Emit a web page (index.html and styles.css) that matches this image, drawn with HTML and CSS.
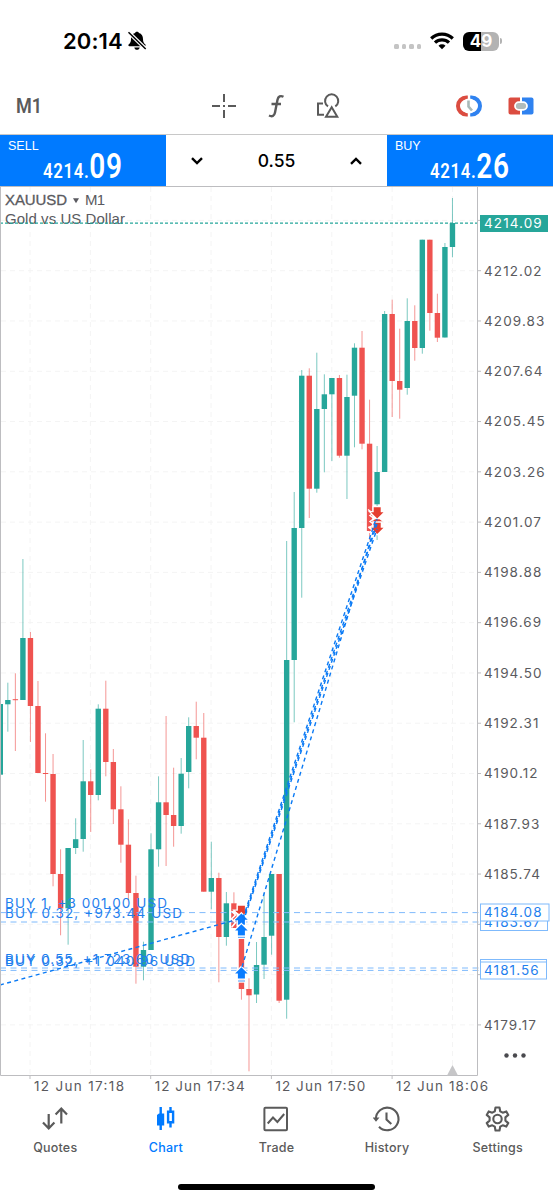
FILE: index.html
```html
<!DOCTYPE html>
<html lang="en">
<head>
    <meta charset="utf-8">
    <title>XAUUSD M1</title>
    <link rel="stylesheet" href="styles.css">
</head>
<body>
    <div class="app">
        <div class="statusbar">
            <span class="time">20:14</span>
            <svg class="bell" width="20" height="20" viewBox="0 0 20 20">
                <path d="M10 .8c-1 0-1.700.5-1.900 1.200C5.200 2.800 4 5 4 8c0 3-.8 4.200-2.200 5.300-.9.8-.4 2 .7 2h15c1.100 0 1.600-1.200.7-2C16.800 12.200 16 11 16 8c0-3-1.200-5.200-4.100-6C11.700 1.300 11 .8 10 .8zM7.300 16.400h5.400c-.3 1.400-1.300 2.300-2.700 2.300s-2.400-.9-2.700-2.300z"/>
                <path d="M1.500 1.200 18.700 18" stroke="#fff" stroke-width="3.800"/>
                <path d="M1.500 1.200 18.700 18" stroke="#000" stroke-width="1.500"/>
            </svg>
            <div class="dots"><i></i><i></i><i></i><i></i></div>
            <svg class="wifi" width="24" height="18" viewBox="0 0 24 18" fill="none" stroke="#000" stroke-width="3.200">
                <path d="M1.200 6.500a15.500 15.500 0 0 1 21.600 0"/>
                <path d="M5 10.700a10 10 0 0 1 14 0"/>
                <path d="M12 17.200 8.500 13.700a5 5 0 0 1 7 0z" fill="#000" stroke="none"/>
            </svg>
            <div class="battery">49</div>
            <div class="battery-cap"></div>
        </div>

        <div class="toolbar">
            <div class="timeframe"><span>M1</span></div>
            <svg class="tool-cross" width="26" height="26" viewBox="0 0 26 26" stroke="#5a5a5a" stroke-width="2" fill="none">
                <path d="M13 1v8M13 17v8M1 13h8M17 13h8M12 13h2"/>
            </svg>
            <svg class="tool-func" width="18" height="26" viewBox="0 0 18 26" stroke="#5a5a5a" stroke-width="2.400" fill="none">
                <path d="M16.500 3.800c-3-1.500-5.300-.5-6 3L8 19.500c-.7 3.500-2.800 4.500-6 3M4.500 11h9.500"/>
            </svg>
            <svg class="tool-shapes" width="24" height="26" viewBox="0 0 24 26" stroke="#5a5a5a" stroke-width="2" fill="none">
                <path d="M7 10.500H2v11.300h6"/>
                <path d="M12 13.400a6.600 6.600 0 1 1 7.300 0"/>
                <path d="M15.700 14.200 21.300 23.800H10z"/>
            </svg>
            <svg class="tool-clock" width="26" height="22" viewBox="0 0 26 22" fill="none">
                <path d="M11.800 2.500H10.500a8.500 8.500 0 0 0 0 17h1.300" stroke="#db4c40" stroke-width="4"/>
                <path d="M14.200 2.500h1.300a8.500 8.500 0 0 1 0 17h-1.300" stroke="#2f82f0" stroke-width="4"/>
                <circle cx="13" cy="11" r="7.500" fill="#fff"/>
                <path d="M12.500 5.500v6l3.500 4" stroke="#a9b9b8" stroke-width="2.600"/>
            </svg>
            <svg class="tool-link" width="26" height="18" viewBox="0 0 26 18">
                <path d="M2.500.5H12v17H2.500a2 2 0 0 1-2-2v-13a2 2 0 0 1 2-2z" fill="#db4c40"/>
                <path d="M14 .5h9.500a2 2 0 0 1 2 2v13a2 2 0 0 1-2 2H14z" fill="#2f82f0"/>
                <rect x="7" y="5.200" width="12" height="7.600" rx="3.800" fill="#b1bcbb" stroke="#fff" stroke-width="1.800"/>
            </svg>
        </div>

        <div class="deal">
            <div class="quote sell">
                <span class="side">SELL</span>
                <span class="price">4214.<b>09</b></span>
            </div>
            <div class="volume">
                <svg width="12" height="8" viewBox="0 0 12 8" fill="none" stroke="#000" stroke-width="2.400"><path d="M1 1.200 6 6l5-4.800"/></svg>
                <span>0.55</span>
                <svg width="12" height="8" viewBox="0 0 12 8" fill="none" stroke="#000" stroke-width="2.400"><path d="M1 6.800 6 2l5 4.800"/></svg>
            </div>
            <div class="quote buy">
                <span class="side">BUY</span>
                <span class="price">4214.<b>26</b></span>
            </div>
        </div>

        <svg class="chart" id="chart" width="553" height="914" viewBox="0 186 553 914"></svg>

        <div class="tabs">
            <div class="tab">
                <svg width="28" height="28" viewBox="0 0 28 28" fill="none" stroke="#5a5a5a" stroke-width="2.200">
                    <path d="M7.700 9v14.500M2 17.500l5.700 6 5.700-6M20.300 18.500V4M14.600 9.500l5.700-6 5.700 6"/>
                </svg>
                <span>Quotes</span>
            </div>
            <div class="tab active">
                <svg width="28" height="28" viewBox="0 0 28 28" fill="#007aff" stroke="#007aff" stroke-width="2.400">
                    <path d="M8.700 2v23M18.500 2v4.500M18.500 18v4.500"/>
                    <path d="M5 10l2-1.500h5.200v12H5z" stroke="none"/>
                    <path d="M16.100 6.800h5v10.400h-5z" fill="none"/>
                </svg>
                <span>Chart</span>
            </div>
            <div class="tab">
                <svg width="28" height="28" viewBox="0 0 28 28" fill="none" stroke="#5a5a5a" stroke-width="2">
                    <rect x="2.400" y="2.700" width="22.600" height="22.600" rx="1"/>
                    <path d="M5.700 18.500l5.300-6 4.400 4.500L22.200 9"/>
                </svg>
                <span>Trade</span>
            </div>
            <div class="tab">
                <svg width="28" height="28" viewBox="0 0 28 28" fill="none" stroke="#5a5a5a" stroke-width="2.100">
                    <path d="M2.900 14A11.300 11.300 0 1 1 6 21.700"/>
                    <path d="M-.5 12.500h7L3 16.800z" fill="#5a5a5a" stroke="none"/>
                    <path d="M13.500 7.500v7l4.800 4.500"/>
                </svg>
                <span>History</span>
            </div>
            <div class="tab">
                <svg width="28" height="28" viewBox="0 0 28 28" fill="none" stroke="#5a5a5a" stroke-width="2.100" stroke-linejoin="round">
                    <path d="M11.500 2.500h4l.7 3.800 2.500 1.400 3.600-1.300 2 3.500-2.900 2.500v3.200l2.900 2.500-2 3.500-3.600-1.300-2.500 1.400-.7 3.800h-4l-.7-3.800-2.500-1.400-3.600 1.300-2-3.500 2.900-2.500v-3.200L2.700 9.900l2-3.500 3.600 1.300 2.500-1.400z"/>
                    <circle cx="13.500" cy="14" r="4.200"/>
                </svg>
                <span>Settings</span>
            </div>
        </div>
        <div class="home"></div>
    </div>
    <script src="chart.js"></script>
</body>
</html>
```
FILE: styles.css
```css
body {
    margin: 0;
    background-color: #ffffff;
    font-family: Inter, "Liberation Sans", sans-serif;
}
.app {
    display: flex;
    flex-direction: column;
    width: 553px;
    height: 1200px;
    overflow: hidden;
}
.statusbar {
    display: flex;
    align-items: center;
    box-sizing: border-box;
    height: 82px;
    padding: 0 51px 0 63px;
}
.time {
    width: 59px;
    font-size: 22px;
    font-weight: 600;
    letter-spacing: 0.1px;
    white-space: nowrap;
}
.bell {
    margin-left: 5px;
}
.dots {
    display: flex;
    gap: 3px;
    margin: 11px 9px 0 auto;
}
.dots i {
    width: 4.500px;
    height: 4.500px;
    border-radius: 1.500px;
    background-color: #c4c4c4;
}
.battery {
    width: 36px;
    height: 19px;
    margin-left: 9px;
    border-radius: 6px;
    background: linear-gradient(90deg, #000000 50%, #b3b3b3 50%);
    color: #ffffff;
    font-size: 17px;
    font-weight: 700;
    line-height: 19px;
    text-align: center;
}
.battery-cap {
    width: 2px;
    height: 6px;
    margin-left: 1px;
    border-radius: 0 2px 2px 0;
    background-color: #b3b3b3;
}
.toolbar {
    display: flex;
    align-items: center;
    box-sizing: border-box;
    height: 52px;
    padding: 0 19px 5px 16px;
}
.timeframe {
    width: 195px;
    color: #5a5a5a;
    font-family: Roboto, sans-serif;
    font-size: 21px;
    font-weight: 600;
}
.timeframe span {
    display: inline-block;
    transform: scaleX(0.86);
    transform-origin: left;
}
.tool-func {
    margin-left: 30px;
}
.tool-shapes {
    margin-left: 31px;
}
.tool-clock {
    margin-left: auto;
}
.tool-link {
    margin-left: 26px;
}
.deal {
    display: flex;
    box-sizing: border-box;
    height: 52px;
    border-top: 1px solid #c8c8c8;
}
.quote {
    display: flex;
    flex-direction: column;
    width: 166px;
    height: 51px;
    background-color: #007aff;
    color: #ffffff;
}
.side {
    height: 17px;
    padding: 4px 0 0 8px;
    font-family: "Liberation Sans", sans-serif;
    font-size: 12.500px;
    line-height: 15px;
}
.price {
    align-self: center;
    font-family: Roboto, sans-serif;
    font-size: 21px;
    font-weight: 600;
    line-height: 22px;
    letter-spacing: 0.8px;
    transform: scaleX(0.8);
}
.price b {
    font-size: 35px;
    font-weight: 600;
}
.volume {
    display: flex;
    flex: 1;
    align-items: center;
    justify-content: space-between;
    padding: 0 25px;
    font-size: 17.500px;
    font-weight: 500;
}
.chart {
    display: block;
    flex: none;
}
.grid {
    stroke: #f4f4f4;
    stroke-dasharray: 5 4;
}
.axis {
    fill: none;
    stroke: #bdbdc0;
}
.label {
    fill: #5a5a5e;
    font-size: 13.500px;
}
.number {
    letter-spacing: 1.1px;
}
.symbol {
    fill: #5a5a60;
    font-family: "Liberation Sans", sans-serif;
    font-size: 15px;
}
.up {
    fill: #26a69a;
    stroke: #26a69a;
}
.down {
    fill: #ef5350;
    stroke: #ef5350;
}
.wick {
    stroke-width: 1;
    opacity: 0.6;
}
.body {
    stroke: none;
}
.bid {
    stroke: #26a69a;
    stroke-width: 1.300;
    stroke-dasharray: 3 2;
}
.position {
    stroke: #7fbafc;
    stroke-dasharray: 6 4.500;
}
.position-text {
    fill: #1f80ee;
    font-size: 13.500px;
}
.position-box {
    fill: #ffffff;
    stroke: #7fbafc;
}
.trend {
    stroke: #0a7af5;
    stroke-width: 1.400;
    stroke-dasharray: 4 3.400;
}
.tabs {
    display: flex;
    height: 60px;
    padding-top: 5px;
}
.tab {
    display: flex;
    flex: 1;
    flex-direction: column;
    align-items: center;
    color: #5a5a5a;
    font-size: 12.500px;
    font-weight: 500;
    letter-spacing: 0.2px;
}
.tab span {
    margin-top: 7px;
    line-height: 16px;
}
.active {
    color: #007aff;
}
.home {
    width: 197px;
    height: 6px;
    margin: 18.500px auto 0;
    border-radius: 3px;
    background-color: #000000;
}
```
FILE: chart.js
```javascript
// direction, high, body top, body bottom, low
const candles = [
    ["up", 704, 704, 774.7, 774.7], ["up", 682.7, 700, 704.3, 731.7], ["down", 673.3, 699.2, 700.2, 751],
    ["up", 559, 638, 700, 700], ["down", 632, 638, 706, 742], ["down", 681, 706, 773, 773],
    ["down", 733.3, 773, 774, 801.7], ["down", 754, 774, 874, 886.3], ["down", 849.3, 874, 908.5, 935.3],
    ["up", 848, 848, 908.3, 944.7], ["up", 818.3, 839.2, 848, 854], ["up", 740, 781.3, 839, 851.7],
    ["down", 769.3, 781.3, 795, 832], ["up", 704.3, 708.7, 795, 800.3], ["down", 680.7, 708.7, 762, 776.3],
    ["down", 749, 762, 809.3, 824], ["down", 786.3, 809.3, 844.7, 862.7], ["down", 819.3, 844.7, 893, 900],
    ["down", 875.7, 893, 966.7, 983.7], ["up", 941.7, 950, 966.7, 980.3], ["up", 833.3, 849.3, 950, 950],
    ["up", 776.3, 802.3, 849.3, 866.7], ["down", 716, 802.3, 815, 866], ["down", 767.7, 815, 826, 846.7],
    ["up", 758, 773.7, 826, 833.7], ["up", 717.3, 726, 772, 788.3], ["down", 701.7, 726, 737.7, 759.3],
    ["down", 713, 737.7, 891.7, 891.7], ["up", 841.7, 878, 891.7, 909.3], ["down", 872.7, 878, 937, 982.3],
    ["up", 892, 903.3, 937, 945.7], ["down", 892.3, 903.3, 928, 928], ["down", 906, 906, 989, 999.7],
    ["down", 978.3, 989, 995.3, 1071.3], ["up", 942, 965, 994.5, 1003], ["up", 892.7, 937, 964.7, 979],
    ["up", 874, 874, 935.7, 954.7], ["down", 874, 874, 1000.7, 1003], ["up", 541, 660, 999.7, 1018.7],
    ["up", 492, 528, 660, 722.3], ["up", 370, 375.7, 528, 597.7], ["down", 368.3, 375.7, 488.7, 518],
    ["up", 352.7, 409, 488.7, 492.7], ["up", 374.3, 394.3, 409, 472.3], ["up", 378, 378, 394.3, 461],
    ["down", 375, 378, 455.7, 457.7], ["up", 374.7, 397, 455.7, 499], ["up", 343.3, 347.7, 395.7, 447.3],
    ["down", 331, 347.7, 443.7, 449.3], ["down", 399.7, 443.7, 531, 540], ["up", 446, 472, 504.3, 540],
    ["up", 311, 314, 472, 472], ["down", 299.7, 314, 381, 417], ["down", 328.7, 381, 389.7, 418.7],
    ["up", 298.3, 321, 388, 394.7], ["down", 305.3, 321, 348, 360.7], ["up", 239.7, 239.7, 348, 353.7],
    ["down", 239.7, 239.7, 313, 330.7], ["down", 293.7, 313, 337.7, 342], ["up", 243, 247, 337.5, 337.5],
    ["up", 198, 223, 247, 257.3]
];
const times = ["17:18", "17:34", "17:50", "18:06"];
let out = "";

function line(cls, x1, y1, x2, y2) {
    out += `<line class="${cls}" x1="${x1}" y1="${y1}" x2="${x2}" y2="${y2}"/>`;
}

// width 0 keeps the natural width of the text
function text(cls, x, y, width, str, extra) {
    const fit = width ? `textLength="${width}"` : "";
    out += `<text class="${cls}" x="${x}" y="${y}" ${fit} ${extra || ""}>${str}</text>`;
}

// Arrow with a white edge, dir is 1 for up and -1 for down, y is the tip
function arrow(x, y, dir, color) {
    const p = [[0, 0], [6.3, 6.3], [3.5, 6.3], [3.5, 11.3], [-3.5, 11.3], [-3.5, 6.3], [-6.3, 6.3]];
    const points = p.map(([a, b]) => (x + a) + "," + (y + b * dir)).join(" ");
    out += `<polygon points="${points}" fill="${color}" stroke="#fff" stroke-width="2.4" paint-order="stroke"/>`;
}

// Grid and axis
for (let i = 0; i < 8; i++) {
    line("grid", 30 + i * 60.35, 187, 30 + i * 60.35, 1075);
}
for (let i = -1; i < 16; i++) {
    const y = 270.7 + i * 50.28;
    line("grid", 1, y, 477, y);
    line("axis", 477, y, 481, y);
    // rows 13 and 14 are under the position tags
    if (i >= 0 && i !== 13 && i !== 14) {
        text("label number", 484, y + 4.8, 0, (4212.02 - i * 2.19).toFixed(2));
    }
}

// Symbol
text("symbol", 5, 205, 62, "XAUUSD", 'stroke="#5a5a60" stroke-width="0.3"');
out += '<path d="M73 198.300h6l-3 5z" fill="#5a5a60"/>';
text("symbol", 85, 205, 20, "M1");
text("symbol", 5, 223.500, 120, "Gold vs US Dollar");

candles.forEach(([dir, high, top, bottom, low], i) => {
    const x = 0.3 + i * 7.536;
    line(dir + " wick", x, high, x, low);
    out += `<rect class="${dir} body" x="${x - 2.7}" y="${top}" width="5.4" height="${bottom - top}"/>`;
});

line("bid", 0, 223.2, 477, 223.2);

// Open positions
[912.6, 922, 968, 970.4].forEach(y => line("position", 0, y, 480, y));
text("position-text", 5, 908.3, 162, "BUY 1, +3 001.00 USD");
text("position-text", 5, 918, 177, "BUY 0.32, +973.44 USD");
text("position-text", 5, 963.8, 185, "BUY 0.55, +1 723.60 USD");
text("position-text", 5, 966.3, 190, "BUY 0.32, +1 040.96 USD");

// Deals
arrow(241.4, 917, -1, "#e53e30");
out += '<path d="M231.500 911l4 4-4 4 4 3.500-4 5M233 911l6 4" fill="none" stroke="#fff" stroke-width="1.600"/>';
arrow(241.4, 913.5, 1, "#0a7cff");
arrow(241.4, 924.3, 1, "#0a7cff");
arrow(241.4, 967.3, 1, "#0a7cff");
[937.3, 981].forEach(y => {
    out += `<rect x="237.500" y="${y - 1.5}" width="8" height="3.200" fill="#fff"/>`;
    out += `<rect x="238" y="${y - 0.5}" width="7" height="1" fill="#4a9cf8"/>`;
});
out += '<path d="M368 509.500l5 4-3 2 4 3-4 3 4 3-5 3 4 3-4 2" fill="none" stroke="#fff" stroke-width="1.400"/>';
arrow(377.2, 518.5, -1, "#e53e30");
out += '<path d="M372 521.500h10.500l-3-2.300h-4.500z" fill="#e53e30"/>';
arrow(377.2, 534, -1, "#e53e30");

line("trend", 0, 985, 239, 919);
line("trend", 243, 918, 376, 519);
line("trend", 243, 920, 377, 524);
line("trend", 243, 922, 377, 529);
line("trend", 242, 967, 377, 519);

// Price tags
function tag(y, width, price) {
    out += `<rect class="position-box" x="480.500" y="${y - 8.5}" width="${width}" height="17"/>`;
    if (price) {
        text("position-text number", 484, y + 4.8, 0, price);
    }
}
tag(922, 67, "4183.67");
tag(912.5, 68.5, "4184.08");
tag(968, 66, "");
tag(970.5, 66, "4181.56");
out += '<rect x="480" y="215" width="68" height="17" fill="#26a69a"/>';
text("label number", 484, 228, 0, "4214.09", 'style="fill: #fff"');

// Frame, times and the shift marker
out += '<path class="axis" d="M0 186.500h553M.5 187v888.500h477V187"/>';
times.forEach((t, i) => {
    const x = 30 + i * 120.7;
    line("axis", x, 1075, x, 1079);
    text("label", x + 4, 1091, i === 3 ? 92 : 90, "12 Jun " + t);
});
out += '<path d="M452.500 1065l5.500 10.500h-11z" fill="#c6c6c8"/>';
[506.500, 515, 523.500].forEach(x => {
    out += `<circle cx="${x}" cy="1055.500" r="2.200" fill="#4a4a4e"/>`;
});

document.getElementById("chart").innerHTML = out;
```
